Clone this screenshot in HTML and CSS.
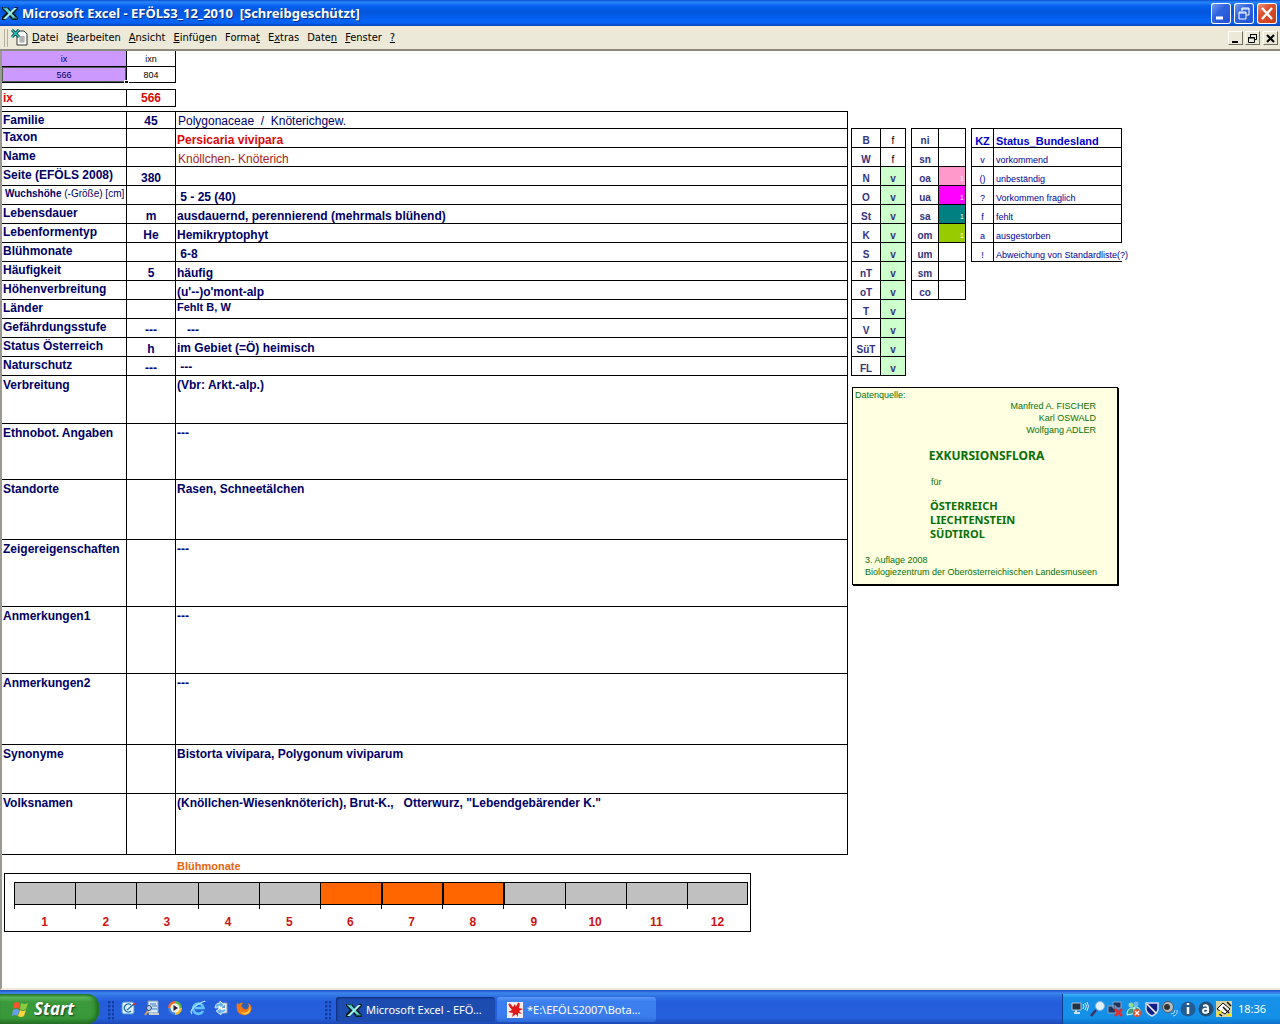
FILE: index.html
```html
<!DOCTYPE html>
<html lang="de">
<head>
<meta charset="utf-8">
<title>Microsoft Excel - EFÖLS3_12_2010 [Schreibgeschützt]</title>
<link rel="stylesheet" href="styles.css">
</head>
<body>
<svg class="defs" aria-hidden="true">
  <symbol id="excel" viewBox="0 0 16 14">
    <path d="M0 1h6l3 4 4-4h3v2l-4 4 4 5v2h-6l-3-4-4 4H0v-3l4-4-4-4z" fill="#0b1a1a"/>
    <path d="M1 2h4l9 10h-3z" fill="#5fd8d8"/>
    <path d="M12 2h3L4 13H1z" fill="#a4f0ec"/>
    <path d="M1 2h5M10 12h5" stroke="#2a8f94"/>
  </symbol>
</svg>
<header class="titlebar">
  <svg class="title-icon"><use href="#excel"/></svg>
  <h1>Microsoft Excel - EFÖLS3_12_2010&nbsp; [Schreibgeschützt]</h1>
  <div class="window-buttons">
    <button type="button" aria-label="Minimieren"><svg viewBox="0 0 20 21"><path d="M5 15h7" stroke="#fff" stroke-width="3"/></svg></button>
    <button type="button" aria-label="Wiederherstellen"><svg viewBox="0 0 20 21"><path d="M8 8V5h7v7h-3M7 6h8M5 9h7v7H5zM5 10h7" fill="none" stroke="#fff"/></svg></button>
    <button type="button" class="close" aria-label="Schließen"><svg viewBox="0 0 20 21"><path d="M5 5l10 11M15 5L5 16" stroke="#fff" stroke-width="2.4"/></svg></button>
  </div>
</header>
<nav class="menubar">
  <span class="grip"></span>
  <svg class="sheet-icon" viewBox="0 0 17 17"><path d="M6 2h7l3 3v11H6z" fill="#fff" stroke="#333"/><path d="M8 8h6M8 10h6M8 12h6M10 7v7M12 7v7" stroke="#999"/><path d="M1 1l7 7M8 1L1 8" stroke="#063c3c" stroke-width="3"/><path d="M1 1l7 7M8 1L1 8" stroke="#2fc4c4" stroke-width="1.4"/></svg>
  <button type="button"><u>D</u>atei</button>
  <button type="button"><u>B</u>earbeiten</button>
  <button type="button"><u>A</u>nsicht</button>
  <button type="button"><u>E</u>infügen</button>
  <button type="button">Forma<u>t</u></button>
  <button type="button">E<u>x</u>tras</button>
  <button type="button">Date<u>n</u></button>
  <button type="button"><u>F</u>enster</button>
  <button type="button"><u>?</u></button>
  <div class="doc-buttons">
    <button type="button" aria-label="Mappe minimieren"><svg viewBox="0 0 13 13"><path d="M3 10h6" stroke="#000" stroke-width="2"/></svg></button>
    <button type="button" aria-label="Mappe wiederherstellen"><svg viewBox="0 0 13 13"><path d="M4.500 5V2.500h6v5H8M4 2.500h7M2.500 5.500h6v5h-6zM2 6h7" fill="none" stroke="#000"/></svg></button>
    <button type="button" class="doc-close" aria-label="Mappe schließen"><svg viewBox="0 0 13 13"><path d="M3 3l7 7M10 3l-7 7" stroke="#000" stroke-width="2"/></svg></button>
  </div>
</nav>
<main class="sheet">
  <section class="record">
    <table class="grid index">
      <tr><td class="picked key">ix</td><td class="count">ixn</td></tr>
      <tr><td class="picked key selected">566<i class="handle"></i></td><td class="count">804</td></tr>
    </table>
    <table class="grid current">
      <tr><th scope="row">ix</th><td>566</td></tr>
    </table>
    <table class="grid details">
      <tr class="first"><th scope="row">Familie</th><td class="code">45</td><td class="plain">Polygonaceae&nbsp; /&nbsp; Knöterichgew.</td></tr>
      <tr><th scope="row">Taxon</th><td class="code"></td><td class="taxon">Persicaria vivipara</td></tr>
      <tr><th scope="row">Name</th><td class="code"></td><td class="plain german">Knöllchen- Knöterich</td></tr>
      <tr><th scope="row">Seite (EFÖLS 2008)</th><td class="code">380</td><td></td></tr>
      <tr><th scope="row" class="size"><b>Wuchshöhe</b> (-Größe) [cm]</th><td class="code"></td><td>&nbsp;5 - 25 (40)</td></tr>
      <tr><th scope="row">Lebensdauer</th><td class="code">m</td><td>ausdauernd, perennierend (mehrmals blühend)</td></tr>
      <tr><th scope="row">Lebenformentyp</th><td class="code">He</td><td>Hemikryptophyt</td></tr>
      <tr><th scope="row">Blühmonate</th><td class="code"></td><td>&nbsp;6-8</td></tr>
      <tr><th scope="row">Häufigkeit</th><td class="code">5</td><td>häufig</td></tr>
      <tr><th scope="row">Höhenverbreitung</th><td class="code"></td><td>(u'--)o'mont-alp</td></tr>
      <tr><th scope="row">Länder</th><td class="code"></td><td class="top small">Fehlt B, W</td></tr>
      <tr><th scope="row">Gefährdungsstufe</th><td class="code">---</td><td>&nbsp;&nbsp; ---</td></tr>
      <tr><th scope="row">Status Österreich</th><td class="code">h</td><td class="middle">im Gebiet (=Ö) heimisch</td></tr>
      <tr><th scope="row">Naturschutz</th><td class="code">---</td><td class="middle">&nbsp;---</td></tr>
      <tr class="tall h48"><th scope="row">Verbreitung</th><td></td><td>(Vbr: Arkt.-alp.)</td></tr>
      <tr class="tall h56"><th scope="row">Ethnobot. Angaben</th><td></td><td>---</td></tr>
      <tr class="tall h60"><th scope="row">Standorte</th><td></td><td>Rasen, Schneetälchen</td></tr>
      <tr class="tall h67"><th scope="row">Zeigereigenschaften</th><td></td><td>---</td></tr>
      <tr class="tall h67"><th scope="row">Anmerkungen1</th><td></td><td>---</td></tr>
      <tr class="tall h71"><th scope="row">Anmerkungen2</th><td></td><td>---</td></tr>
      <tr class="tall h49"><th scope="row">Synonyme</th><td></td><td>Bistorta vivipara, Polygonum viviparum</td></tr>
      <tr class="tall h61"><th scope="row">Volksnamen</th><td></td><td>(Knöllchen-Wiesenknöterich), Brut-K.,&nbsp;&nbsp; Otterwurz, "Lebendgebärender K."</td></tr>
    </table>
    <h2 class="chart-title">Blühmonate</h2>
    <div class="chart">
      <ol class="months">
        <li><span>1</span></li><li><span>2</span></li><li><span>3</span></li><li><span>4</span></li><li><span>5</span></li>
        <li class="bloom"><span>6</span></li><li class="bloom"><span>7</span></li><li class="bloom"><span>8</span></li>
        <li><span>9</span></li><li><span>10</span></li><li><span>11</span></li><li><span>12</span></li>
      </ol>
    </div>
  </section>
  <aside class="side">
    <div class="lists">
      <table class="grid regions">
        <tr><th scope="row">B</th><td class="absent">f</td></tr>
        <tr><th scope="row">W</th><td class="absent">f</td></tr>
        <tr><th scope="row">N</th><td>v</td></tr>
        <tr><th scope="row">O</th><td>v</td></tr>
        <tr><th scope="row">St</th><td>v</td></tr>
        <tr><th scope="row">K</th><td>v</td></tr>
        <tr><th scope="row">S</th><td>v</td></tr>
        <tr><th scope="row">nT</th><td>v</td></tr>
        <tr><th scope="row">oT</th><td>v</td></tr>
        <tr><th scope="row">T</th><td>v</td></tr>
        <tr><th scope="row">V</th><td>v</td></tr>
        <tr><th scope="row">SüT</th><td>v</td></tr>
        <tr><th scope="row">FL</th><td>v</td></tr>
      </table>
      <table class="grid zones">
        <tr><th scope="row">ni</th><td></td></tr>
        <tr><th scope="row">sn</th><td></td></tr>
        <tr><th scope="row">oa</th><td class="pink">1</td></tr>
        <tr><th scope="row">ua</th><td class="magenta">1</td></tr>
        <tr><th scope="row">sa</th><td class="teal">1</td></tr>
        <tr><th scope="row">om</th><td class="lime">1</td></tr>
        <tr><th scope="row">um</th><td></td></tr>
        <tr><th scope="row">sm</th><td></td></tr>
        <tr><th scope="row">co</th><td></td></tr>
      </table>
      <table class="grid legend">
        <tr><th scope="col">KZ</th><th scope="col">Status_Bundesland</th></tr>
        <tr><td>v</td><td>vorkommend</td></tr>
        <tr><td>()</td><td>unbeständig</td></tr>
        <tr><td>?</td><td>Vorkommen fraglich</td></tr>
        <tr><td>f</td><td>fehlt</td></tr>
        <tr><td>a</td><td>ausgestorben</td></tr>
        <tr class="open"><td>!</td><td>Abweichung von Standardliste(?)</td></tr>
      </table>
    </div>
    <div class="source">
      <p>Datenquelle:</p>
      <p class="authors">Manfred A. FISCHER<br>Karl OSWALD<br>Wolfgang ADLER</p>
      <p class="book">EXKURSIONSFLORA</p>
      <p class="for">für</p>
      <p class="countries">ÖSTERREICH<br>LIECHTENSTEIN<br>SÜDTIROL</p>
      <p class="edition">3. Auflage 2008<br>Biologiezentrum der Oberösterreichischen Landesmuseen</p>
    </div>
  </aside>
</main>
<footer class="taskbar">
  <button type="button" class="start">
    <svg viewBox="0 0 18 17"><path d="M3 2q3-2 6 0L8 8Q5 6 2 8z" fill="#f0562a"/><path d="M10 2q3 2 7 0l-2 6q-3 2-6 0z" fill="#8ccc3c"/><path d="M2 9q3-2 6 0l-1 6q-3-2-6 0z" fill="#6a9cf4"/><path d="M9 9q3 2 6 0l-2 6q-3 2-6 0z" fill="#fbd13c"/></svg>
    Start
  </button>
  <span class="dots"></span>
  <div class="quick">
    <button type="button" aria-label="Desktop anzeigen"><svg viewBox="0 0 16 16"><rect x="1" y="2" width="12" height="12" rx="2" fill="#e4f2fb" stroke="#4a90c8"/><path d="M10 5a4 4 0 1 0 0 6M6 10l7-6" fill="none" stroke="#2073b8" stroke-width="1.500"/><path d="M12 5l3-2" stroke="#c33" stroke-width="2"/></svg></button>
    <button type="button" aria-label="Suchen"><svg viewBox="0 0 16 16"><path d="M4 1h10v12H4z" fill="#d9e9f8" stroke="#7799bb"/><path d="M6 4h6M8 6h5M8 9h5" stroke="#3a78c0"/><circle cx="5" cy="8" r="2.500" fill="#a9d2f3" stroke="#446"/><path d="M4 11l-3 4" stroke="#e09a60" stroke-width="2"/><path d="M5 14h10" stroke="#ccc" stroke-width="2"/></svg></button>
    <button type="button" aria-label="Media Player"><svg viewBox="0 0 16 16"><path d="M8 8V1a7 7 0 0 1 7 7z" fill="#5ab83c"/><path d="M8 8H1a7 7 0 0 1 7-7z" fill="#ec6a2c"/><path d="M8 8v7a7 7 0 0 1-7-7z" fill="#3b83de"/><path d="M8 8h7a7 7 0 0 1-7 7z" fill="#f6c22c"/><circle cx="8" cy="8" r="4.500" fill="#f5f5f5"/><path d="M6.500 5v6l4.500-3z" fill="#223"/></svg></button>
    <button type="button" aria-label="Internet Explorer"><svg viewBox="0 0 16 16"><path d="M13 11a5.200 5.200 0 1 1 .5-3H5" fill="none" stroke="#62c4fb" stroke-width="2.600"/><path d="M2 14Q-1 10 7 5t8-3" fill="none" stroke="#a9e0ff" stroke-width="1.300"/></svg></button>
    <button type="button" aria-label="Outlook"><svg viewBox="0 0 16 16"><path d="M5 3h9v10H5z" fill="#f2f6fb" stroke="#89a"/><path d="M9 5h3v3H9z" fill="#68a0d8"/><path d="M2 8q0-5 5-5V1l4 4-4 3V6Q4 6 4 8zM13 9q0 4-5 4v2l-5-4 5-3v2q3 0 3-1z" fill="#5fb0f0" stroke="#fff" stroke-width=".7"/></svg></button>
    <button type="button" aria-label="Firefox"><svg viewBox="0 0 16 16"><circle cx="8" cy="8" r="6" fill="#2c62b4"/><path d="M1 3l2 1q2-2 4-1L5 6l2 2q1 2 4 1 3-2 1-6 4 2 3.500 6A7.500 7.500 0 0 1 1 10Q0 6 1 3z" fill="#f07818"/><path d="M13 4q2 5-2 8-4 2-7-1 4 6 9 2 3-4 0-9z" fill="#fccb3c"/></svg></button>
  </div>
  <span class="dots"></span>
  <div class="tasks">
    <button type="button" class="active"><svg><use href="#excel"/></svg>Microsoft Excel - EFÖ...</button>
    <button type="button"><svg viewBox="0 0 16 16"><path d="M0 0h16v16H0z" fill="#f6eeee"/><path d="M8 2l1 3 4-3-1 4 4 1-4 2 3 3-4-1v4l-2-3-4 3 1-4-5-1 4-2-3-4 4 1z" fill="#e01818"/><path d="M2 2l5 6M12 1L9 7" stroke="#e01818" stroke-width="2"/></svg>*E:\EFÖLS2007\Bota...</button>
  </div>
  <div class="tray">
    <svg viewBox="0 0 18 16"><path d="M1 2h9v7H1z" fill="#234" stroke="#a9c4dc"/><path d="M3 12h6M5 9v3" stroke="#cde" stroke-width="2"/><path d="M12 3q2 2 0 5M14 2q3 3 0 7M16 1q3 4 0 9" fill="none" stroke="#d8ecff"/></svg>
    <svg viewBox="0 0 18 16"><circle cx="11" cy="5" r="4.500" fill="#dff1ff" stroke="#8fb4d8"/><path d="M7 9l-5 6" stroke="#3d3060" stroke-width="2.500"/></svg>
    <svg viewBox="0 0 18 16"><path d="M6 1h8v6H6zM1 5h8v7H1z" fill="#20345c" stroke="#8aa8c8"/><path d="M8 8l7 7M15 8l-7 7" stroke="#e82c2c" stroke-width="2.500"/></svg>
    <svg viewBox="0 0 18 16"><circle cx="6" cy="4" r="2.500" fill="#8fdc9c"/><circle cx="11" cy="3" r="2.500" fill="#6cb6f0"/><path d="M2 14q0-7 5-7t5 5zM9 6q6-1 6 5H9z" fill="#3c9c8c" stroke="#cfe"/><circle cx="12" cy="12" r="4" fill="#e8502c"/><path d="M10 10l4 4M14 10l-4 4" stroke="#fff" stroke-width="1.400"/></svg>
    <svg viewBox="0 0 18 16"><path d="M3 2h12v6q0 4-6 7-6-3-6-7z" fill="#102088" stroke="#d8dcf0" stroke-width="1.500"/><path d="M4 3l9 9" stroke="#fff" stroke-width="1.500"/></svg>
    <svg viewBox="0 0 18 16"><circle cx="7" cy="6" r="5.500" fill="#b8bcc4" stroke="#555"/><circle cx="6" cy="6" r="3" fill="#333"/><path d="M10 13q4 0 4-4M12 15q5-1 4-6" fill="none" stroke="#a9d4ff"/></svg>
    <svg viewBox="0 0 18 16"><circle cx="9" cy="8" r="7.500" fill="#245c94"/><path d="M9 6v7M9 2v2" stroke="#fff" stroke-width="2.500"/></svg>
    <svg viewBox="0 0 18 16"><circle cx="9" cy="8" r="7.500" fill="#245078"/><path d="M6 5q5-2 5 2v5M11 8q-5-1-5 2t5 1" fill="none" stroke="#fff" stroke-width="2"/></svg>
    <svg viewBox="0 0 18 16"><path d="M1 0h16v16H1z" fill="#d8d49c"/><path d="M2 8l6-6 7 6-5 5z" fill="#fff" stroke="#111"/><path d="M8 6l6 6M3 12l4 3M12 1l4 4" stroke="#111" stroke-width="1.500"/><path d="M2 14l4-4M13 14h3" stroke="#ffe600" stroke-width="2"/></svg>
    <time>18:36</time>
  </div>
</footer>
</body>
</html>
```
FILE: styles.css
```css
*, *::before { box-sizing: border-box; }

body {
  margin: 0;
  min-height: 100vh;
  display: flex;
  flex-direction: column;
  background: #fff;
  font-family: "Liberation Sans", Arial, sans-serif;
  font-size: 12px;
}

button { border: 0; padding: 0; margin: 0; background: none; font: inherit; color: inherit; }
h1, h2, p, ol { margin: 0; padding: 0; font-size: inherit; }
svg { display: block; }
.defs { position: absolute; width: 0; height: 0; }

/* Title bar */
.titlebar {
  height: 26px;
  display: flex;
  align-items: center;
  gap: 4px;
  padding: 0 3px 0 2px;
  background: linear-gradient(#0a4fd0 0, #2a86fa 2px, #0560ee 6px, #0356dc 12px, #0463f6 20px, #0462f2 23px, #0340b4 26px);
}
.title-icon { width: 16px; height: 14px; }
.titlebar h1 {
  flex: 1;
  color: #fff;
  font: bold 13px/20px "Noto Sans", sans-serif;
  text-shadow: 1px 1px 0 #0a2a80;
}
.window-buttons { display: flex; gap: 3px; }
.window-buttons button {
  width: 20px;
  height: 21px;
  border-radius: 3px;
  background: linear-gradient(135deg, #7fa4f4, #3165e0 40%, #1f4fd0);
  box-shadow: inset 0 0 0 1px #fff;
}
.window-buttons .close { background: linear-gradient(135deg, #f09a80, #dc5030 40%, #c43c18); }

/* Menu bar */
.menubar {
  height: 25px;
  display: flex;
  align-items: center;
  gap: 8px;
  padding: 0 2px 0 4px;
  background: #ece9d8;
  border-bottom: 2px solid #8c8a7e;
  font: 11px/14px "DejaVu Sans Condensed", "Noto Sans", sans-serif;
}
.grip { width: 4px; height: 18px; border: solid #b4b09c; border-width: 0 1px; }
.sheet-icon { width: 17px; height: 17px; margin: 0 -4px 0 -5px; }
.doc-buttons { display: flex; gap: 2px; margin-left: auto; }
.doc-buttons button {
  width: 15px;
  height: 14px;
  border: 1px solid;
  border-color: #fff #716f64 #716f64 #fff;
}
.doc-buttons .doc-close { margin-left: 1px; }

/* Worksheet */
.sheet {
  flex: 1;
  display: grid;
  grid-template-columns: 1fr 432px;
  align-items: start;
  border-left: 2px solid #9c9a90;
  border-bottom: 2px solid #ece9d8;
  color: #000066;
}
.grid { border-collapse: separate; border-spacing: 0; table-layout: fixed; line-height: 14px; }
.grid th, .grid td {
  padding: 1px;
  border: solid #000;
  border-width: 0 1px 1px 0;
  white-space: nowrap;
  vertical-align: bottom;
  text-align: left;
}

.index { width: 174px; font-size: 9px; }
.index td { height: 16px; text-align: center; vertical-align: middle; padding: 0; }
.index .key { width: 125px; background: #cc99ff; }
.index .count { color: #000; }
.index .selected { position: relative; box-shadow: inset 0 0 0 1px #506050; }
.handle { position: absolute; right: -3px; bottom: -2px; width: 5px; height: 4px; background: #000; border: 1px solid #fff; }

.current { width: 174px; margin-top: 6px; border-top: 1px solid #000; color: #dd0808; font-weight: bold; }
.current th { width: 125px; height: 17px; vertical-align: top; }
.current td { text-align: center; }

.details { width: 100%; margin-top: 4px; border-top: 1px solid #000; }
.details th { width: 125px; height: 19px; vertical-align: top; }
.details td { padding-bottom: 0; font-weight: bold; }
.details .first > * { height: 17px; padding-bottom: 0; }
.details .code { text-align: center; }
.details tr > :nth-child(2) { width: 49px; }
.details .plain { padding-left: 2px; font-weight: normal; }
.details .taxon { color: #dd0808; }
.details .german { color: #aa2222; }
.details .top { vertical-align: top; padding-top: 0; }
.details .middle { vertical-align: middle; }
.details .small { font-size: 11px; }
.details .size { font-size: 10px; font-weight: normal; padding-left: 3px; }
.details .tall td, .details .tall th { vertical-align: top; padding-top: 2px; }
.h48 th { height: 48px; }
.h49 th { height: 49px; }
.h56 th { height: 56px; }
.h60 th { height: 60px; }
.h61 th { height: 61px; }
.h67 th { height: 67px; }
.h71 th { height: 71px; }

/* Flowering months */
.chart-title { padding: 5px 0 0 175px; font-size: 11px; line-height: 13px; color: #e8640c; }
.chart { margin: 0 97px 0 2px; padding: 8px 2px 0 9px; height: 59px; border: 1px solid #000; }
.months {
  display: grid;
  grid-template-columns: repeat(12, 1fr);
  list-style: none;
  text-align: center;
  font-weight: bold;
  line-height: 14px;
  color: #cc1414;
}
.months li { background: linear-gradient(#000, #000) 0 0 / 1px 27px no-repeat; }
.months li::before {
  content: "";
  display: block;
  height: 23px;
  background: #c0c0c0;
  border: solid #000;
  border-width: 1px 0 1px 1px;
}
.months .bloom::before { background: #ff6600; }
.months .bloom + .bloom::before, .months .bloom + li::before { border-left-width: 2px; }
.months li:last-child::before { border-right-width: 1px; }
.months span { display: block; padding-top: 10px; }

/* Side tables */
.side { padding: 77px 0 0 3px; }
.lists { display: flex; align-items: flex-start; gap: 5px; height: 248px; }
.lists .grid { border: solid #000; border-width: 1px 0 0 1px; font-size: 10px; line-height: 12px; }
.lists th, .lists td { height: 19px; padding-bottom: 0; }
.regions, .zones { width: 55px; color: #333380; }
.regions th, .regions td, .zones th { text-align: center; font-weight: bold; }
.regions th { width: 29px; }
.regions td { background: #ccffcc; }
.regions .absent { background: #fff; color: #000; font-weight: normal; }
.zones th { width: 27px; }
.lists .zones td { text-align: right; color: #fff; font-size: 7px; }
.zones .pink { background: #ff99cc; }
.zones .magenta { background: #ff00ff; }
.zones .teal { background: #008080; }
.zones .lime { background: #99cc00; }
.legend { width: 151px; color: #000099; }
.legend td { font-size: 9px; }
.legend th { font-size: 11px; color: #0000cc; }
.legend tr > :first-child { width: 22px; text-align: center; }
.legend tr > :last-child { padding-left: 2px; }
.legend .open > :last-child { border-right: 0; }

/* Source note */
.source {
  width: 266px;
  margin: 11px 0 0 1px;
  padding: 1px 2px 6px;
  border: 1px solid #000;
  box-shadow: 1px 1px 0 #000;
  background: #ffffe1;
  color: #087008;
  font-size: 9px;
  line-height: 12px;
}
.source .authors { padding-right: 19px; text-align: right; margin-top: -1px; }
.source .book { margin-top: 12px; padding-left: 3px; text-align: center; font: bold 12px/16px "Noto Sans", sans-serif; }
.source .for { margin: 12px 0 11px; padding-left: 76px; }
.source .countries { padding-left: 75px; font: bold 11px/14px "Noto Sans", sans-serif; }
.source .edition { margin-top: 13px; padding-left: 10px; }

/* Taskbar */
.taskbar {
  height: 34px;
  display: flex;
  align-items: stretch;
  background: linear-gradient(#1c4cc0 0, #3c86ec 3px, #2c6ce0 7px, #245ddb 12px, #2560dc 28px, #1c48b4 34px);
  color: #fff;
  font: 11px/14px "Noto Sans", sans-serif;
}
.start {
  display: flex;
  align-items: center;
  gap: 5px;
  width: 99px;
  margin-top: 4px;
  padding: 0 0 0 11px;
  border-radius: 0 12px 12px 0;
  background: linear-gradient(#2c7c2c, #5cb85c 3px, #3c9a3c 8px, #389838 24px, #287028);
  box-shadow: inset -3px 0 4px #1f6c1f;
  font: italic bold 17px/20px "Noto Sans", sans-serif;
  text-shadow: 1px 1px 2px #143c14;
}
.start svg { width: 18px; height: 17px; }
.dots {
  width: 6px;
  margin: 11px 0 4px 9px;
  background: radial-gradient(circle at 1px 1px, #123c9c 1px, transparent 2px) 0 0 / 4px 4px;
}
.quick { display: flex; align-items: center; gap: 7px; margin: 2px 64px 0 7px; }
.quick svg { width: 16px; height: 16px; }
.quick button { width: 16px; }
.tasks { display: flex; gap: 2px; margin: 7px 0 2px 5px; }
.tasks button {
  display: flex;
  align-items: center;
  gap: 4px;
  width: 159px;
  padding-left: 10px;
  border-radius: 3px;
  background: linear-gradient(#5c98f8, #3c80f0 4px, #3a7cec 20px, #2c68d8);
  white-space: nowrap;
}
.tasks .active { background: #1c4cb0; box-shadow: inset 1px 1px 2px #0c2c78; }
.tasks svg { width: 16px; height: 16px; flex: none; }
.tray {
  display: flex;
  align-items: center;
  margin: 4px 0 0 auto;
  width: 218px;
  padding-left: 8px;
  border-left: 1px solid #0c3c90;
  background: linear-gradient(#3cb4f8, #1890e8 4px, #1290e8 24px, #0c70c8);
}
.tray svg { width: 18px; height: 16px; }
.tray time { margin-left: 5px; }
```
